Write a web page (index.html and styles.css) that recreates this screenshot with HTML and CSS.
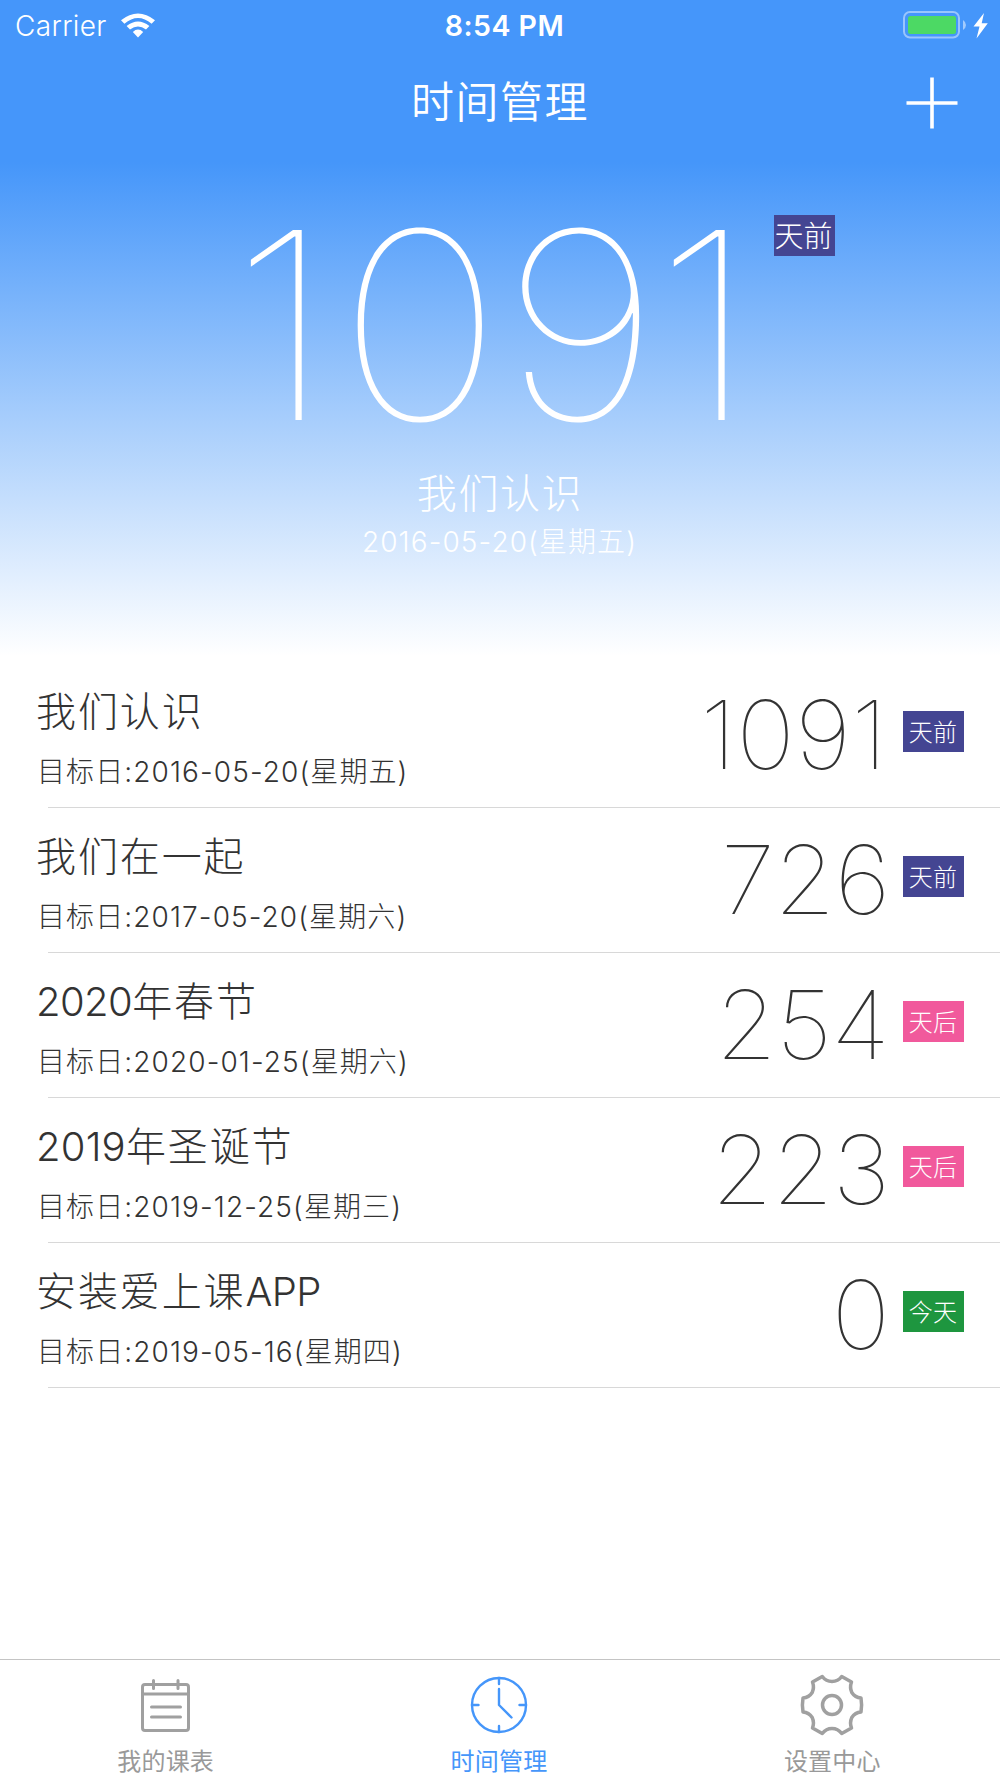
FILE: index.html
```html
<!DOCTYPE html>
<html lang="zh-CN">
<head>
<meta charset="utf-8">
<title>时间管理</title>
<link rel="stylesheet" href="styles.css">
</head>
<body>
<div class="app">
  <header class="top">
    <div class="status">
      <div class="status-left">
        <span class="carrier">Carrier</span>
        <svg class="wifi" width="34" height="25" viewBox="0 0 34 25" fill="#fff"><path d="M0 7.200Q17-6.400 34 7.200L30.600 10.800Q17-.6 3.400 10.800Z"/><path d="M5.600 13Q17 3.800 28.400 13L25 16.500Q17 10.400 9 16.500Z"/><path d="M11.800 19Q17 14.200 22.200 19L17 24.500Z"/></svg>
      </div>
      <div class="clock">8:54 PM</div>
      <div class="status-right">
        <svg width="86" height="28" viewBox="0 0 86 28"><rect x="1" y="1" width="55" height="25.500" rx="6" fill="none" stroke="#fff" stroke-opacity=".45" stroke-width="2"/><rect x="5" y="5" width="48" height="18" rx="2.500" fill="#4cd964"/><path d="M60 9Q63 11 63 14T60 19Z" fill="#fff" fill-opacity=".5"/><path d="M81 2L70.500 15.500H76.500L73.500 27.500L84.800 12.200H78.700Z" fill="#fff"/></svg>
      </div>
    </div>
    <nav class="nav">
      <h1 class="nav-title">时间管理</h1>
      <svg class="add" width="52" height="52" viewBox="0 0 52 52" stroke="#fff" stroke-width="3.600"><path d="M.5 26H51.500M26 .5V51.500"/></svg>
    </nav>
  </header>
  <section class="hero">
    <div class="hero-count"><span class="hero-num"><span class="lead">1</span>0<span class="tight">9</span>1</span><span class="hero-tag">天前</span></div>
    <div class="hero-name">我们认识</div>
    <div class="hero-date">2016-05-20(星期五)</div>
  </section>
  <main class="list">
    <div class="row"><div class="info"><div class="name">我们认识</div><div class="date">目标日:2016-05-20(星期五)</div></div><div class="num wide">1091</div><div class="tag past">天前</div></div>
    <div class="row"><div class="info"><div class="name">我们在一起</div><div class="date">目标日:2017-05-20(星期六)</div></div><div class="num">726</div><div class="tag past">天前</div></div>
    <div class="row"><div class="info"><div class="name"><span class="latin">2020</span>年春节</div><div class="date">目标日:2020-01-25(星期六)</div></div><div class="num">254</div><div class="tag future">天后</div></div>
    <div class="row"><div class="info"><div class="name"><span class="latin year-2019">2019</span>年圣诞节</div><div class="date">目标日:2019-12-25(星期三)</div></div><div class="num">223</div><div class="tag future">天后</div></div>
    <div class="row"><div class="info"><div class="name">安装爱上课<span class="latin">APP</span></div><div class="date">目标日:2019-05-16(星期四)</div></div><div class="num">0</div><div class="tag today">今天</div></div>
  </main>
  <footer class="tabs">
    <div class="tab">
      <svg width="64" height="64" viewBox="0 0 64 64" fill="none" stroke="#a0a0a0" stroke-width="3" stroke-linecap="round"><rect x="8.500" y="11.500" width="46" height="46" rx="2.500"/><path d="M8.500 21H54.500M19.500 7.500V15.500M44 7.500V15.500M17.500 34H46.500M17.500 44H46.500"/></svg>
      <span>我的课表</span>
    </div>
    <div class="tab active">
      <svg width="64" height="64" viewBox="0 0 64 64" fill="none" stroke="#4596fa" stroke-width="2.400" stroke-linecap="round" stroke-linejoin="round"><circle cx="32" cy="32" r="27"/><path d="M32 5V11M32 53V59M5 32H11.500M52.500 32H59M32 16V32L44.500 44.500"/></svg>
      <span>时间管理</span>
    </div>
    <div class="tab">
      <svg width="64" height="64" viewBox="0 0 64 64" fill="none" stroke="#a0a0a0" stroke-width="3.500" stroke-linejoin="round"><circle cx="32" cy="32" r="9.500"/><path d="M22.300 3.500Q26 8.500 32 8.500T41.700 3.500L51.500 9Q49.500 14.500 51.800 19.500Q55 24.500 61 25Q62.200 32 61 39Q55 39.500 51.800 44.500Q49.500 49.500 51.500 55L41.700 60.500Q38 55.500 32 55.500T22.300 60.500L12.500 55Q14.500 49.500 12.200 44.500Q9 39.500 3 39Q1.800 32 3 25Q9 24.500 12.200 19.500Q14.500 14.500 12.500 9Z"/></svg>
      <span>设置中心</span>
    </div>
  </footer>
</div>
</body>
</html>
```
FILE: styles.css
```css
* { box-sizing: border-box; }
body {
  margin: 0;
  background: #fff;
  color: #333;
  font-family: Inter, "Noto Sans CJK SC", sans-serif;
  font-weight: 300;
}
svg { display: block; flex: none; }
.app { width: 1000px; height: 1778px; display: flex; flex-direction: column; overflow: hidden; }
.top { height: 162px; flex: none; background: #4596fa; color: #fff; }
.status { height: 49px; display: grid; grid-template-columns: 1fr auto 1fr; align-items: center; padding: 0 11px 0 15px; }
.status-left { display: flex; align-items: center; gap: 14px; }
.carrier { font-size: 28px; line-height: 48px; padding-top: 2px; font-weight: 350; letter-spacing: .35px; }
.clock { font-size: 28.5px; line-height: 48px; padding: 2px 0 0 5px; font-weight: 600; letter-spacing: 0.5px; }
.status-right { display: flex; justify-content: flex-end; }
.nav { height: 108px; display: grid; grid-template-columns: 1fr auto 1fr; align-items: center; padding: 0 42px; }
.nav-title { grid-column: 2; margin: 0; padding-bottom: 2px; font-size: 43px; line-height: 60px; font-weight: 350; letter-spacing: 1.5px; }
.add { justify-self: end; }
.hero {
  height: 501px; flex: none; color: #fff; text-align: center; padding-top: 2px;
  background: linear-gradient(#4596fa 0, #a8cefc 260px, #fff 494px);
}
.hero-count { height: 301px; display: flex; align-items: flex-start; padding-left: 231px; }
.hero-num { width: 543px; text-align: left; font-size: 261px; line-height: 322px; font-weight: 130; transform: scaleX(1.067); transform-origin: left; }
.lead { letter-spacing: 4px; }
.tight { letter-spacing: -5px; }
.hero-tag { flex: none; margin-top: 51px; width: 61px; height: 41px; line-height: 43px; font-size: 29px; text-indent: -2px; background: #444592; }
.hero-name { font-size: 40px; line-height: 58px; letter-spacing: 1.6px; }
.hero-date { font-size: 28px; line-height: 38px; letter-spacing: 1.1px; padding-right: 1px; }
.list { flex: 1; }
.row { height: 145px; display: flex; align-items: flex-start; padding: 0 36px 0 36px; background: linear-gradient(#d8d8d8, #d8d8d8) 48px 144px / 952px 1px no-repeat; }
.info { flex: 1; padding-top: 20px; }
.name { font-size: 40px; line-height: 58px; letter-spacing: 1.9px; }
.latin { letter-spacing: -.6px; }
.year-2019 { letter-spacing: .2px; }
.date { font-size: 28px; line-height: 40px; margin-top: 11px; padding-left: 1px; letter-spacing: 1.1px; }
.num { font-size: 95px; line-height: 116px; font-weight: 110; padding-top: 14px; margin-right: 13.5px; letter-spacing: -1px; transform: scaleX(1.045); transform-origin: right; }
.num.wide { margin-right: 15px; letter-spacing: 0; }
.tag { width: 61px; height: 41px; line-height: 43px; margin-top: 48px; text-align: center; text-indent: -1px; color: #fff; font-size: 24px; letter-spacing: .3px; }
.past { background: #444592; }
.future { background: #f1599c; }
.today { background: #1e963f; }
.tabs { height: 119px; flex: none; border-top: 1px solid #c4c4c4; display: grid; grid-template-columns: repeat(3, 1fr); color: #999; }
.tab { display: flex; flex-direction: column; align-items: center; padding: 13px 2px 0 0; font-size: 24px; line-height: 36px; font-weight: 400; }
.tab span { margin-top: 7px; letter-spacing: .2px; }
.active { color: #4596fa; }
```
